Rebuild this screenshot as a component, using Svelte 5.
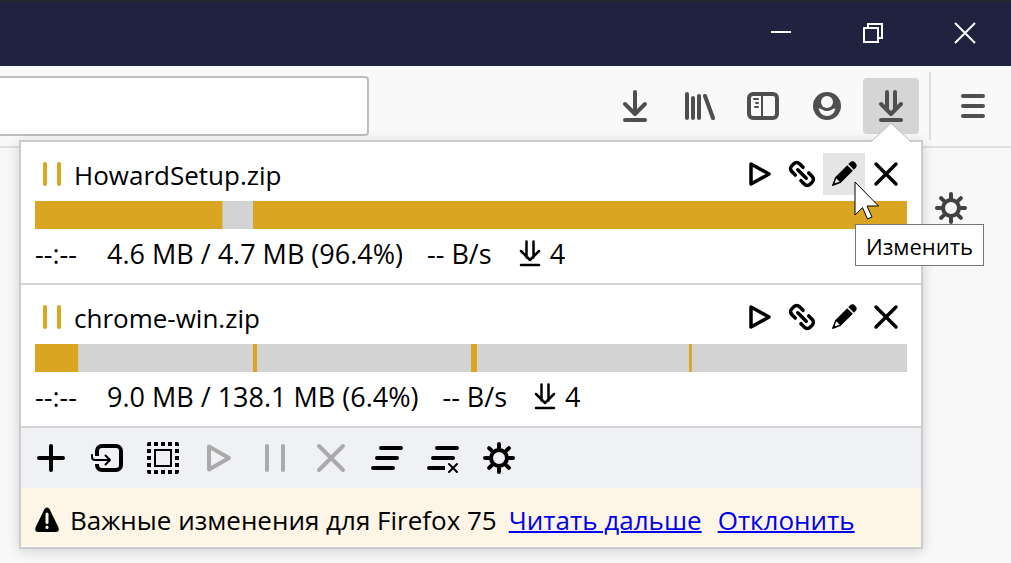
<script>
	const toolbarIcons = [
		{ icon: 'download', label: 'Загрузки' },
		{ icon: 'library', label: 'Библиотека' },
		{ icon: 'sidebar', label: 'Боковые панели' },
		{ icon: 'account', label: 'Аккаунт' }
	]

	// parts are [start, length] in percent of the file
	const downloads = [
		{
			name: 'HowardSetup.zip',
			time: '--:--',
			size: '4.6 MB / 4.7 MB (96.4%)',
			speed: '-- B/s',
			threads: 4,
			parts: [[0, 21.5], [25, 75]],
			hovered: 'edit'
		},
		{
			name: 'chrome-win.zip',
			time: '--:--',
			size: '9.0 MB / 138.1 MB (6.4%)',
			speed: '-- B/s',
			threads: 4,
			parts: [[0, 4.95], [25, 0.46], [50, 0.69], [75, 0.32]]
		}
	]

	const actions = [
		{ icon: 'start', label: 'Запустить' },
		{ icon: 'link', label: 'Копировать ссылку' },
		{ icon: 'edit', label: 'Изменить' },
		{ icon: 'remove', label: 'Удалить' }
	]

	const tools = [
		{ icon: 'add', label: 'Добавить' },
		{ icon: 'import', label: 'Импорт' },
		{ icon: 'select', label: 'Выделить' },
		{ icon: 'play', label: 'Запустить', disabled: true },
		{ icon: 'pause', label: 'Пауза', disabled: true },
		{ icon: 'cross', label: 'Удалить', disabled: true },
		{ icon: 'list', label: 'Список' },
		{ icon: 'clear', label: 'Очистить список' },
		{ icon: 'gear', label: 'Настройки' }
	]

	const spokes = [0, 45, 90, 135, 180, 225, 270, 315]
</script>

{#snippet glyph(name)}
	<svg class="glyph" viewBox="0 0 32 32" aria-hidden="true">
		{#if name === 'download'}
			<path d="M16 2v21M6 14l10 10 10-10M6 30h20" />
		{:else if name === 'threads'}
			<path d="M12 2v17M20 2v17M6 14l10 10 10-10M6 30h20" />
		{:else if name === 'library'}
			<path d="M4 4v24M10 8v20M16 6v22M22 6l8 22" />
		{:else if name === 'sidebar'}
			<rect x="2" y="4" width="28" height="24" rx="4" />
			<path class="thin" d="M15 5v22M7 9h4M9 13h2M8 17h3" />
		{:else if name === 'account'}
			<circle class="solid" cx="16" cy="16" r="14" />
			<circle class="hole" cx="16" cy="12" r="6" />
			<path class="hole" d="M7.5 18.6Q9.5 18.4 11 19.4Q16 22.4 21 19.4Q22.5 18.4 24.5 18.6Q22.5 26 16 26Q9.5 26 7.5 18.6z" />
		{:else if name === 'menu'}
			<path d="M6 6h20M6 16h20M6 26h20" />
		{:else if name === 'gear'}
			<circle cx="16" cy="16" r="8" />
			{#each spokes as angle}
				<path d="M16 6V2" transform="rotate({angle} 16 16)" />
			{/each}
		{:else if name === 'start'}
			<path class="medium" d="M7 6l18 10L7 26z" />
		{:else if name === 'link'}
			<g class="medium" transform="translate(16 16) rotate(45)">
				<path d="M-4 -5.5H-9a4 4 0 0 0-4 4v3a4 4 0 0 0 4 4H-4M4 -5.5H9a4 4 0 0 1 4 4v3a4 4 0 0 1-4 4H4M-6 0H6" />
			</g>
		{:else if name === 'edit'}
			<g transform="translate(16 16) rotate(-45)">
				<path class="solid" d="M-8.5 -4H8.5V4H-8.5zM10 -4h2a4 4 0 0 1 0 8H10z" />
				<path class="hair" d="M-8.5 -3.2L-15.5 0L-8.5 3.2" />
				<path class="solid" d="M-17 0l4.500-2v4z" />
			</g>
		{:else if name === 'remove'}
			<path class="medium" d="M6 6l20 20M26 6L6 26" />
		{:else if name === 'add'}
			<path d="M16 4v24M4 16h24" />
		{:else if name === 'import'}
			<path class="flat" d="M6 14V9a5 5 0 0 1 5-5h14a5 5 0 0 1 5 5v14a5 5 0 0 1-5 5H11a5 5 0 0 1-5-5v-1" />
			<path class="thin" d="M1 13v2a3 3 0 0 0 3 3h15M14.5 13.5l4.5 4.5-4.5 4.5" />
		{:else if name === 'select'}
			<rect class="dots" x="2" y="2" width="28" height="28" />
			<rect class="thin square" x="8" y="8" width="16" height="16" />
		{:else if name === 'play'}
			<path d="M6 4.5L26 16L6 27.5z" />
		{:else if name === 'pause'}
			<path d="M8 4v24M24 4v24" />
		{:else if name === 'paused'}
			<path d="M9 6v20M23 6v20" />
		{:else if name === 'cross'}
			<path d="M4 4l24 24M28 4L4 28" />
		{:else if name === 'list'}
			<path d="M10 6h20M6 16h20M2 26h20" />
		{:else if name === 'clear'}
			<path d="M10 6h20M6 16h20M2 26h8" />
			<path class="flat" d="M9 26h9" />
			<path class="thin" d="M22 22l8 8M30 22l-8 8" />
		{/if}
	</svg>
{/snippet}

<div class="window">
	<header class="titlebar">
		<button aria-label="Свернуть">
			<svg width="22" height="22" viewBox="0 0 22 22"><path d="M1 10h20" /></svg>
		</button>
		<button aria-label="Восстановить">
			<svg width="22" height="22" viewBox="0 0 22 22"><path d="M2 6h14v14H2zM6 6V2h14v14h-4" /></svg>
		</button>
		<button aria-label="Закрыть">
			<svg width="22" height="22" viewBox="0 0 22 22"><path d="M1 1l20 20M21 1L1 21" /></svg>
		</button>
	</header>

	<nav class="navbar">
		<input class="address" type="text" aria-label="Адрес" />
		<div class="buttons">
			{#each toolbarIcons as b}
				<button class="nav-button" aria-label={b.label}>{@render glyph(b.icon)}</button>
			{/each}
			<button class="nav-button active" aria-label="Менеджер загрузок">{@render glyph('threads')}</button>
		</div>
		<button class="nav-button menu" aria-label="Меню">{@render glyph('menu')}</button>
	</nav>

	<main>
		<button class="nav-button settings" aria-label="Настройки">{@render glyph('gear')}</button>
	</main>

	<section class="panel">
		<svg class="arrow" width="40" height="20" viewBox="0 0 40 20" aria-hidden="true">
			<path d="M0 20L20 1L40 20" />
		</svg>
		{#each downloads as d}
			<article>
				<div class="head">
					<span class="status">{@render glyph('paused')}</span>
					<span class="name">{d.name}</span>
					{#each actions as a}
						<button class="action" class:hovered={d.hovered === a.icon} aria-label={a.label}>
							{@render glyph(a.icon)}
							{#if d.hovered === a.icon}
								<svg class="cursor" width="26" height="40" viewBox="0 0 26 40" aria-hidden="true">
									<path d="M1 1V34L8.5 26.5L13.5 38L18 36L13 25H24.5z" />
								</svg>
								<span class="tooltip">{a.label}</span>
							{/if}
						</button>
					{/each}
				</div>
				<svg class="progress" role="img" aria-label={d.size}>
					{#each d.parts as [start, length]}
						<rect x="{start}%" width="{length}%" height="100%" />
					{/each}
				</svg>
				<div class="info">
					<span class="time">{d.time}</span>
					<span>{d.size}</span>
					<span>{d.speed}</span>
					<span class="threads">
						<svg width="24" height="28" viewBox="0 0 24 28" aria-hidden="true">
							<path d="M8.5 1.5v16M15.5 1.5v16M3 11l9 9 9-9M3 25h18" />
						</svg>
						{d.threads}
					</span>
				</div>
			</article>
		{/each}
		<div class="tools">
			{#each tools as t}
				<button aria-label={t.label} disabled={t.disabled}>{@render glyph(t.icon)}</button>
			{/each}
		</div>
		<div class="notice">
			<svg width="24" height="26" viewBox="0 0 24 26" aria-hidden="true">
				<path d="M9.5 2Q12-1.2 14.5 2L23.5 20.5Q24.5 25 21 25H3Q-.5 25 .5 20.5z" />
				<path class="mark" d="M12 7v8.5M12 20v.5" />
			</svg>
			<span class="message">Важные изменения для Firefox 75</span>
			<a class="more" href="#more">Читать дальше</a>
			<a href="#dismiss">Отклонить</a>
		</div>
	</section>
</div>

<style>
	:global(body) {
		margin: 0;
		background: #f9f9fa;
	}
	.window {
		position: relative;
		min-height: 100vh;
		overflow: hidden;
		background: #f8f8f8;
		color: #000;
		font: 26px/36px "Open Sans", "Noto Sans", sans-serif;
	}
	button {
		display: flex;
		align-items: center;
		justify-content: center;
		flex: none;
		padding: 0;
		border: 0;
		background: none;
		color: inherit;
		font: inherit;
	}
	svg {
		display: block;
		flex: none;
	}
	.glyph {
		width: 32px;
		height: 32px;
		fill: none;
		stroke: currentColor;
		stroke-width: 4px;
		stroke-linecap: round;
		stroke-linejoin: round;
	}
	.glyph .thin {
		stroke-width: 2px;
	}
	.glyph .hair {
		stroke-width: 1.5px;
	}
	.glyph .medium {
		stroke-width: 3.5px;
	}
	.glyph .flat {
		stroke-linecap: butt;
	}
	.glyph .square {
		stroke-linejoin: miter;
	}
	.glyph .dots {
		stroke-linecap: butt;
		stroke-dasharray: 4 3;
		stroke-dashoffset: 2px;
	}
	.glyph .solid {
		fill: currentColor;
		stroke: none;
	}
	.glyph .hole {
		fill: #f9f9fa;
		stroke: none;
	}

	.titlebar {
		display: flex;
		justify-content: flex-end;
		height: 66px;
		background: linear-gradient(#25282b 2px, #202340 2px);
	}
	.titlebar button {
		width: 92px;
	}
	.titlebar svg {
		fill: none;
		stroke: #fff;
		stroke-width: 2px;
	}

	.navbar {
		display: flex;
		align-items: center;
		height: 80px;
		padding-right: 10px;
		border-bottom: 2px solid #e0e0e1;
		background: #f9f9fa;
		color: #4f4f50;
	}
	.address {
		flex: 1;
		min-width: 0;
		box-sizing: border-box;
		height: 60px;
		margin-right: 238px;
		padding: 0 16px;
		border: 2px solid #bebebe;
		border-left: 0;
		border-radius: 0 4px 4px 0;
		background: #fff;
		font: inherit;
	}
	.buttons {
		display: flex;
		gap: 8px;
	}
	.nav-button {
		width: 56px;
		height: 56px;
		border-radius: 4px;
	}
	.active {
		background: #d5d5d5;
	}
	.menu {
		position: relative;
		margin-left: 26px;
	}
	.menu::before {
		content: "";
		position: absolute;
		top: -6px;
		left: -16px;
		width: 2px;
		height: 68px;
		background: #dededf;
	}

	main {
		display: flex;
		justify-content: flex-end;
		padding: 32px 32px 0;
	}
	.settings {
		color: #424244;
	}

	.panel {
		position: absolute;
		top: 140px;
		left: 19px;
		right: 88px;
		border: 2px solid #ccc;
		background: #fff;
		box-shadow: 0 2px 12px rgba(0, 0, 0, 0.16);
	}
	.arrow {
		position: absolute;
		top: -20px;
		right: 10px;
		fill: #fff;
		stroke: #bbb;
		stroke-width: 1px;
	}
	article {
		padding: 11px 14px 4px;
		border-bottom: 2px solid #d3d3d3;
	}
	.head {
		display: flex;
		align-items: center;
		height: 42px;
		margin-bottom: 6px;
	}
	.status {
		padding: 0 6px 0 1px;
		color: #daa520;
	}
	.name {
		flex: 1;
		padding-top: 2px;
	}
	.action {
		position: relative;
		width: 42px;
		height: 42px;
	}
	.hovered {
		background: #e5e5e5;
	}
	.cursor {
		position: absolute;
		top: 28px;
		left: 31px;
		z-index: 1;
		fill: #fff;
		stroke: #000;
		stroke-width: 1px;
	}
	.tooltip {
		position: absolute;
		top: 71px;
		left: 32px;
		padding: 4px 10px 2px;
		border: 1px solid #767676;
		background: #fff;
		font-size: 22px;
		line-height: 34px;
	}
	.progress {
		width: 100%;
		height: 28px;
		background: #d3d3d3;
		fill: #daa520;
	}
	.info {
		display: flex;
		gap: 24px;
		font-size: 27px;
		line-height: 50px;
	}
	.time {
		min-width: 48px;
	}
	.threads {
		display: flex;
		align-items: center;
		gap: 8px;
		padding-left: 2px;
	}
	.threads svg {
		fill: none;
		stroke: #000;
		stroke-width: 2.5px;
		stroke-linecap: round;
		stroke-linejoin: round;
	}

	.tools {
		display: flex;
		padding: 0 2px;
		background: #f0f1f4;
	}
	.tools button {
		width: 56px;
		height: 60px;
	}
	.tools button:disabled {
		color: #aaa;
	}
	.notice {
		display: flex;
		align-items: center;
		padding: 14px 14px 8px;
		border-bottom: 1px solid #fff;
		background: #fdf5e6;
	}
	.notice svg {
		margin-right: 11px;
	}
	.notice .mark {
		fill: none;
		stroke: #fdf5e6;
		stroke-width: 3px;
		stroke-linecap: round;
	}
	.message {
		margin-right: 12px;
	}
	.more {
		margin-right: 16px;
	}
	a {
		color: #00e;
		text-decoration: underline;
		text-decoration-thickness: 2px;
	}
</style>
